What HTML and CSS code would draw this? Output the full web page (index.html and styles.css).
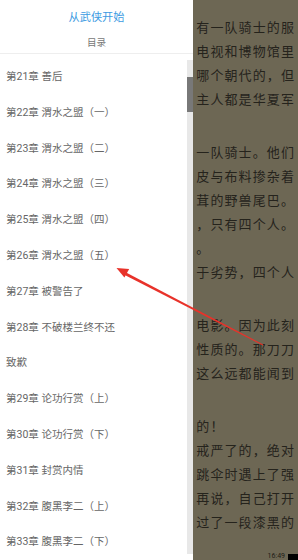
FILE: index.html
```html
<!DOCTYPE html>
<html lang="zh-CN">
<head>
<meta charset="utf-8">
<title>目录</title>
<link rel="stylesheet" href="styles.css">
</head>
<body>
<div class="screen">
  <div class="drawer">
    <div class="header">
      <div class="book-title">从武侠开始</div>
      <div class="subtitle">目录</div>
    </div>
    <div class="body">
      <ul class="chapters">
        <li>第21章 善后</li>
        <li>第22章 渭水之盟（一）</li>
        <li>第23章 渭水之盟（二）</li>
        <li>第24章 渭水之盟（三）</li>
        <li>第25章 渭水之盟（四）</li>
        <li>第26章 渭水之盟（五）</li>
        <li>第27章 被警告了</li>
        <li>第28章 不破楼兰终不还</li>
        <li>致歉</li>
        <li>第29章 论功行赏（上）</li>
        <li>第30章 论功行赏（下）</li>
        <li>第31章 封赏内情</li>
        <li>第32章 腹黑李二（上）</li>
        <li>第33章 腹黑李二（下）</li>
      </ul>
      <div class="track"><div class="thumb"></div></div>
    </div>
  </div>

  <div class="reader">
    <div class="para">
      <div class="line">有一队骑士的服</div>
      <div class="line">电视和博物馆里</div>
      <div class="line">哪个朝代的，但</div>
      <div class="line">主人都是华夏军</div>
    </div>
    <div class="para">
      <div class="line">一队骑士。他们</div>
      <div class="line">皮与布料掺杂着</div>
      <div class="line">茸的野兽尾巴。</div>
      <div class="line">，只有四个人。</div>
      <div class="line">。</div>
      <div class="line">于劣势，四个人</div>
    </div>
    <div class="para">
      <div class="line">电影。因为此刻</div>
      <div class="line">性质的。那刀刀</div>
      <div class="line">这么远都能闻到</div>
    </div>
    <div class="para">
      <div class="line">的！</div>
      <div class="line">戒严了的，绝对</div>
      <div class="line">跳伞时遇上了强</div>
      <div class="line">再说，自己打开</div>
      <div class="line">过了一段漆黑的</div>
    </div>
    <div class="status">
      <span class="time">16:49</span>
      <span class="battery"></span>
    </div>
  </div>

  <svg class="arrow" width="298" height="560" viewBox="0 0 298 560">
    <polygon points="126.1,272.4 263.2,344.5 262.8,345.5 125.2,275.2" fill="#e8322a"/>
    <polygon points="116.5,268 129.2,268.9 124.4,277.6" fill="#e8322a"/>
  </svg>
</div>
</body>
</html>
```
FILE: styles.css
```css
html, body {
  margin: 0;
  padding: 0;
}
body {
  width: 298px;
  height: 560px;
  overflow: hidden;
  font-family: Roboto, "Noto Sans CJK SC", sans-serif;
}
.screen {
  position: relative;
  width: 298px;
  height: 560px;
  overflow: hidden;
  display: flex;
}
.drawer {
  width: 193px;
  height: 560px;
  flex: none;
  background: #fff;
  overflow: hidden;
  display: flex;
  flex-direction: column;
}
.header {
  height: 53px;
  border-bottom: 1px solid #eeeeee;
  text-align: center;
  flex: none;
}
.book-title {
  margin-top: 10px;
  font-size: 11.2px;
  line-height: 15px;
  color: #3c9be2;
}
.subtitle {
  margin-top: 11px;
  font-size: 9.6px;
  line-height: 14px;
  color: #777;
}
.body {
  display: flex;
  flex: 1;
  min-height: 0;
}
.chapters {
  list-style: none;
  margin: 0;
  padding: 5.1px 0 0 0;
  flex: 1;
}
.chapters li {
  height: 35.8px;
  line-height: 35.8px;
  padding-left: 6px;
  font-size: 10.5px;
  color: #666;
  white-space: nowrap;
}
.track {
  width: 6px;
  height: 494px;
  margin-top: 6px;
  background: #e8e8e8;
  flex: none;
}
.thumb {
  margin-top: 17px;
  height: 35px;
  background: #787878;
}
.reader {
  flex: 1;
  min-width: 0;
  height: 560px;
  background: #6d6754;
  color: #25231c;
  padding: 15px 0 0 3.3px;
  box-sizing: border-box;
  font-family: "Noto Sans CJK SC", sans-serif;
  font-size: 13px;
  letter-spacing: 1.1px;
  display: flex;
  flex-direction: column;
}
.para + .para {
  margin-top: 29px;
}
.line {
  height: 24px;
  line-height: 24px;
  white-space: nowrap;
}
.status {
  margin-top: auto;
  display: flex;
  justify-content: flex-end;
  align-items: flex-end;
  height: 8px;
  gap: 3px;
  letter-spacing: 0;
}
.time {
  font-family: Roboto, sans-serif;
  font-size: 7px;
  line-height: 8px;
  color: #1e1d17;
}
.battery {
  width: 10px;
  height: 6px;
  background: #000;
}
.arrow {
  position: absolute;
  left: 0;
  top: 0;
  pointer-events: none;
}
```
